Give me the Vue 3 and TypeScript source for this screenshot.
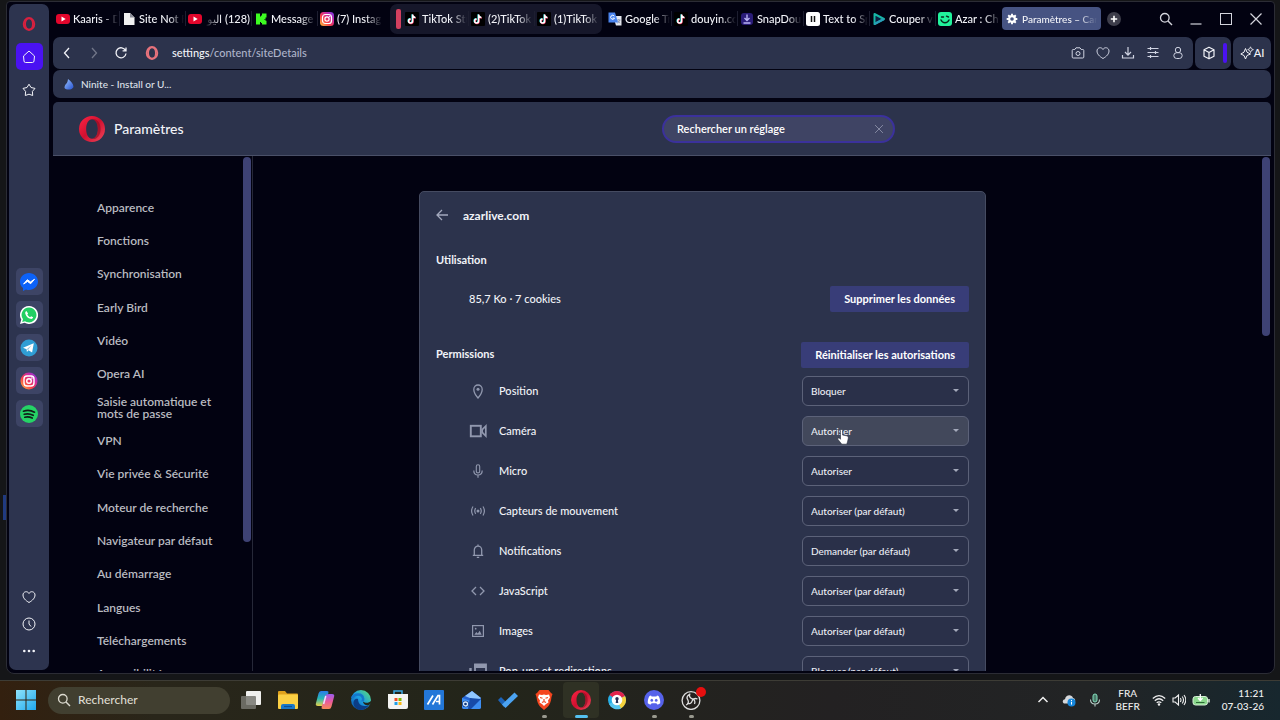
<script setup lang="ts">
import { ref } from 'vue'

interface Tab {
  icon: string
  title: string
  rtl?: boolean
}
interface Permission {
  id: string
  icon: string
  label: string
  value: string
  hovered?: boolean
}

const leftTabs: Tab[] = [
  { icon: 'youtube', title: 'Kaaris - D' },
  { icon: 'file', title: 'Site Not F' },
  { icon: 'youtube', title: '(128) اليو', rtl: true },
  { icon: 'kick', title: 'Message' },
  { icon: 'instagram', title: '(7) Instag' },
]
const groupTabs: Tab[] = [
  { icon: 'tiktok', title: 'TikTok Stu' },
  { icon: 'tiktok', title: '(2)TikTok' },
  { icon: 'tiktok', title: '(1)TikTok' },
]
const rightTabs: Tab[] = [
  { icon: 'translate', title: 'Google Tr' },
  { icon: 'tiktok', title: 'douyin.co' },
  { icon: 'snap', title: 'SnapDou' },
  { icon: 'eleven', title: 'Text to Sp' },
  { icon: 'play', title: 'Couper vi' },
  { icon: 'azar', title: 'Azar : Ch' },
]
const messengers = [
  { icon: 'messenger', label: 'Messenger' },
  { icon: 'whatsapp', label: 'WhatsApp' },
  { icon: 'telegram', label: 'Telegram' },
  { icon: 'insta-round', label: 'Instagram' },
  { icon: 'spotify', label: 'Spotify' },
]
const tools = [
  { icon: 'heart', label: 'Favoris' },
  { icon: 'clock', label: 'Historique' },
  { icon: 'dots', label: 'Plus' },
]
const pageActions = [
  { icon: 'camera', label: 'Capture' },
  { icon: 'heart', label: 'Ajouter aux favoris' },
  { icon: 'download', label: 'Téléchargements' },
  { icon: 'sliders', label: 'Configuration' },
  { icon: 'person', label: 'Profil' },
]
const sections = [
  'Apparence', 'Fonctions', 'Synchronisation', 'Early Bird', 'Vidéo', 'Opera AI',
  'Saisie automatique et mots de passe', 'VPN', 'Vie privée & Sécurité', 'Moteur de recherche',
  'Navigateur par défaut', 'Au démarrage', 'Langues', 'Téléchargements', 'Accessibilité',
]
const choices = [
  'Autoriser', 'Bloquer', 'Autoriser (par défaut)', 'Demander (par défaut)', 'Bloquer (par défaut)',
]
const permissions = ref<Permission[]>([
  { id: 'position', icon: 'pin', label: 'Position', value: 'Bloquer' },
  { id: 'camera', icon: 'video', label: 'Caméra', value: 'Autoriser', hovered: true },
  { id: 'micro', icon: 'mic', label: 'Micro', value: 'Autoriser' },
  { id: 'sensors', icon: 'sensor', label: 'Capteurs de mouvement', value: 'Autoriser (par défaut)' },
  { id: 'notifications', icon: 'bell', label: 'Notifications', value: 'Demander (par défaut)' },
  { id: 'javascript', icon: 'code', label: 'JavaScript', value: 'Autoriser (par défaut)' },
  { id: 'images', icon: 'image', label: 'Images', value: 'Autoriser (par défaut)' },
  { id: 'popups', icon: 'popup', label: 'Pop-ups et redirections', value: 'Bloquer (par défaut)' },
])
const apps = [
  { icon: 'taskview', label: 'Vue des tâches' },
  { icon: 'folder', label: 'Explorateur' },
  { icon: 'copilot', label: 'Copilot' },
  { icon: 'edge', label: 'Edge' },
  { icon: 'store', label: 'Store' },
  { icon: 'maven', label: 'Utilitaire' },
  { icon: 'wallet', label: 'Courrier' },
  { icon: 'todo', label: 'To Do' },
  { icon: 'brave', label: 'Brave', running: true },
  { icon: 'opera', label: 'Opera', running: true, active: true },
  { icon: 'keyring', label: 'Navigateur sécurisé' },
  { icon: 'discord', label: 'Discord', running: true },
  { icon: 'obs', label: 'OBS', running: true },
]
const query = ref('Rechercher un réglage')
</script>

<template>
  <div class="desktop">
    <svg class="defs" aria-hidden="true">
      <defs>
        <linearGradient id="g-opera" x1="0" y1="0" x2="1" y2="1">
          <stop offset="0" stop-color="#ff2444" /><stop offset=".5" stop-color="#d01030" /><stop offset="1" stop-color="#f0485c" />
        </linearGradient>
        <linearGradient id="g-insta" x1="0" y1="1" x2="1" y2="0">
          <stop offset="0" stop-color="#ffc53d" /><stop offset=".4" stop-color="#f53a4c" /><stop offset=".7" stop-color="#c62ba8" /><stop offset="1" stop-color="#6a3bea" />
        </linearGradient>
        <linearGradient id="g-win" x1="0" y1="0" x2="1" y2="1">
          <stop offset="0" stop-color="#8fe3fb" /><stop offset="1" stop-color="#1fa8ee" />
        </linearGradient>
        <linearGradient id="g-edge" x1="0" y1="1" x2="1" y2="0">
          <stop offset="0" stop-color="#0a4fa8" /><stop offset=".5" stop-color="#1b9de2" /><stop offset="1" stop-color="#62e36a" />
        </linearGradient>
        <linearGradient id="g-cop1" x1="0" y1="0" x2="0" y2="1">
          <stop offset="0" stop-color="#2a7bea" /><stop offset=".5" stop-color="#28b7b4" /><stop offset="1" stop-color="#e8d048" />
        </linearGradient>
        <linearGradient id="g-cop2" x1="0" y1="0" x2="0" y2="1">
          <stop offset="0" stop-color="#9a5cf0" /><stop offset=".5" stop-color="#ea5a9c" /><stop offset="1" stop-color="#f88a58" />
        </linearGradient>
        <linearGradient id="g-drop" x1="0" y1="0" x2="1" y2="1">
          <stop offset="0" stop-color="#9cc4ff" /><stop offset="1" stop-color="#2450d0" />
        </linearGradient>
      </defs>

      <symbol id="opera" viewBox="0 0 24 24"><path fill="url(#g-opera)" fill-rule="evenodd" d="M12 0a12 12 0 1 0 0 24 12 12 0 0 0 0-24zm0 3c3.200 0 5.400 4 5.400 9s-2.200 9-5.400 9-5.400-4-5.400-9 2.200-9 5.400-9z" /><path fill="#8c0d22" opacity=".6" d="M12 3c3.200 0 5.400 4 5.400 9s-2.200 9-5.400 9c3 1.500 8-2 8-9s-5-10.500-8-9z" /></symbol>
      <symbol id="opera-flat" viewBox="0 0 24 24"><ellipse cx="12" cy="12" rx="9" ry="10.200" fill="none" stroke="currentColor" stroke-width="3.400" /><ellipse cx="12" cy="12" rx="6.400" ry="9.500" fill="none" stroke="currentColor" stroke-width="2.400" /></symbol>
      <symbol id="youtube" viewBox="0 0 14 14"><rect y="2" width="14" height="10" rx="3" fill="#e3062c" /><path d="M5.500 4.600v4.800L9.700 7z" fill="#fff" /></symbol>
      <symbol id="file" viewBox="0 0 14 14"><path d="M2 1h6l4.500 4.500V13H2z" fill="#f1f1f1" /><path d="M8 1v4.500h4.500z" fill="#8b8d98" /></symbol>
      <symbol id="kick" viewBox="0 0 14 14"><path fill="#3dfb22" d="M2 1.500h4v3h1V3.500h1v-2h4.500v4h-1V7h-1.500v.5H11.500v1.300h1v3.700H8V11H7v-1H6v2.500H2z" /></symbol>
      <symbol id="instagram" viewBox="0 0 14 14"><rect width="14" height="14" rx="3.500" fill="url(#g-insta)" /><rect x="2.500" y="2.500" width="9" height="9" rx="2.800" fill="none" stroke="#fff" stroke-width="1.200" /><circle cx="7" cy="7" r="2.100" fill="none" stroke="#fff" stroke-width="1.200" /><circle cx="9.700" cy="4.400" r=".6" fill="#fff" /></symbol>
      <symbol id="insta-round" viewBox="0 0 18 18"><circle cx="9" cy="9" r="8.500" fill="url(#g-insta)" /><rect x="4" y="4" width="10" height="10" rx="3" fill="none" stroke="#fff" stroke-width="1.400" /><circle cx="9" cy="9" r="2.300" fill="none" stroke="#fff" stroke-width="1.400" /><circle cx="11.900" cy="6.100" r=".8" fill="#fff" /></symbol>
      <symbol id="tiktok" viewBox="0 0 14 14"><rect width="14" height="14" rx="1" fill="#000" /><g fill="none" stroke-width="1.500"><path stroke="#27e6e0" d="M7.200 2.200v6.600a2 2 0 1 1-2-2M7.200 3c.4 1.400 1.300 2.200 2.800 2.300" /><path stroke="#f0305a" d="M8 2.800v6.600a2 2 0 1 1-2-2M8 3.600c.4 1.400 1.300 2.200 2.800 2.300" /><path stroke="#fff" d="M7.600 2.500v6.600a2 2 0 1 1-2-2M7.600 3.300c.4 1.400 1.300 2.200 2.800 2.300" /></g></symbol>
      <symbol id="translate" viewBox="0 0 14 14"><path d="M5 4h8.500v9.500H8z" fill="#e3e6ee" /><path d="M9 8h3.500M10.800 7v1m1 0c-.3 1.500-1.300 2.500-2.300 3.200M9.800 9l2.400 2.300" stroke="#7c8aa8" fill="none" stroke-width=".7" /><path d="M.5.500H7l3 10H.5z" fill="#4a84ee" /><path d="M6.300 4.100a2 2 0 1 0 .2 2H4.700" fill="none" stroke="#fff" /></symbol>
      <symbol id="snap" viewBox="0 0 14 14"><rect x="1" y="1" width="12" height="12" rx="3" fill="#2a1c78" /><path d="M7 2.500v5.800M4.500 6 7 8.500 9.500 6M3.500 11h7" stroke="#b9b2f4" stroke-width="1.400" fill="none" /></symbol>
      <symbol id="eleven" viewBox="0 0 14 14"><rect width="14" height="14" rx="2.500" fill="#fff" /><path d="M5.500 4v6M8.500 4v6" stroke="#111" stroke-width="1.500" /></symbol>
      <symbol id="play" viewBox="0 0 14 14"><path d="M2.500 2 12 7l-9.500 5z" fill="#0c1f40" stroke="#16b6a6" stroke-width="2" stroke-linejoin="round" /><path d="M2.500 12 12 7" stroke="#2b9cb8" stroke-width="2" /></symbol>
      <symbol id="azar" viewBox="0 0 14 14"><rect width="14" height="14" rx="3" fill="#21f39c" /><path d="M3.500 5h2M8.500 4.200l2 .8M3 8c1.500 3.600 6.500 3.600 8 0" stroke="#08291c" stroke-width="1.400" fill="none" stroke-linecap="round" /></symbol>
      <symbol id="gear" viewBox="0 0 14 14"><path d="M7 .8v12.400M.8 7h12.400M2.600 2.600l8.800 8.800M11.400 2.600l-8.800 8.800" stroke="#fff" stroke-width="2.200" /><circle cx="7" cy="7" r="3.400" fill="none" stroke="#fff" stroke-width="2.400" /><circle cx="7" cy="7" r="2.100" fill="#465382" /></symbol>
      <symbol id="plus" viewBox="0 0 14 14"><circle cx="7" cy="7" r="7" fill="#3d3d4a" /><path d="M7 3.800v6.400M3.800 7h6.400" stroke="#fff" stroke-width="1.600" /></symbol>
      <symbol id="drop" viewBox="0 0 14 14"><path d="M6 2c3 2 5.500 5 5.500 8-1 3-7 3.500-9 1 0-2 .5-3 1.500-4C5.500 5.700 5.700 4 6 2z" fill="url(#g-drop)" /></symbol>

      <symbol id="search" viewBox="0 0 14 14"><circle cx="5.800" cy="5.800" r="4.300" fill="none" stroke="currentColor" stroke-width="1.300" /><path d="m9 9 4 4" stroke="currentColor" stroke-width="1.400" /></symbol>
      <symbol id="minimize" viewBox="0 0 14 14"><path d="M1.500 12h11" stroke="currentColor" stroke-width="1.200" /></symbol>
      <symbol id="maximize" viewBox="0 0 14 14"><rect x="1.500" y="1.500" width="11" height="11" fill="none" stroke="currentColor" /></symbol>
      <symbol id="close" viewBox="0 0 14 14"><path d="m1.500 1.500 11 11m0-11-11 11" stroke="currentColor" stroke-width="1.200" /></symbol>
      <symbol id="back" viewBox="0 0 14 14"><path d="M9 2 4.500 7 9 12" fill="none" stroke="currentColor" stroke-width="1.300" /></symbol>
      <symbol id="forward" viewBox="0 0 14 14"><path d="m5 2 4.500 5L5 12" fill="none" stroke="currentColor" stroke-width="1.300" /></symbol>
      <symbol id="reload" viewBox="0 0 14 14"><path d="M11.500 4.500A5 5 0 1 0 12 7.500M12 1.500v3.400H8.600" fill="none" stroke="currentColor" stroke-width="1.300" /></symbol>
      <symbol id="home" viewBox="0 0 14 14"><path d="M1.500 6 7 1l5.500 5-.5 5q-.1 1.500-1.500 1.500h-7Q2.100 12.500 2 11z" fill="none" stroke="currentColor" stroke-linejoin="round" /></symbol>
      <symbol id="star" viewBox="0 0 14 14"><path d="m7 1.200 2 3.300 4 .9-2.600 3 .3 4.100L7 11.200l-3.700 1.300.3-4.100L1 5.400l4-.9z" fill="none" stroke="currentColor" stroke-linejoin="round" /></symbol>
      <symbol id="heart" viewBox="0 0 14 14"><path d="M7 12.500C3.500 10.500 1 8 1 5c0-3.500 4.500-4.500 6-1.500C8.500.5 13 1.500 13 5c0 3-2.500 5.500-6 7.500z" fill="none" stroke="currentColor" stroke-linejoin="round" /></symbol>
      <symbol id="clock" viewBox="0 0 14 14"><circle cx="7" cy="7" r="6" fill="none" stroke="currentColor" /><path d="M7 3.500V7l2 2.500" fill="none" stroke="currentColor" /></symbol>
      <symbol id="dots" viewBox="0 0 14 14"><g fill="currentColor"><circle cx="2.300" cy="7" r="1.300" /><circle cx="7" cy="7" r="1.300" /><circle cx="11.700" cy="7" r="1.300" /></g></symbol>
      <symbol id="camera" viewBox="0 0 14 14"><path d="M1.200 4.500q0-1 1-1h1.600L5 1.800h4l1.200 1.700h1.600q1 0 1 1V11q0 1-1 1H2.200q-1 0-1-1z" fill="none" stroke="currentColor" /><circle cx="7" cy="7.500" r="2" fill="none" stroke="currentColor" /></symbol>
      <symbol id="download" viewBox="0 0 14 14"><path d="M7 1v8M4 6l3 3.200L10 6M1.500 9v3h11V9" fill="none" stroke="currentColor" stroke-width="1.200" /></symbol>
      <symbol id="sliders" viewBox="0 0 14 14"><path d="M1.500 2.500h11M1.500 6.500h11M1.500 10.500h11M4.500 1v3M9.500 5v3M4.500 9v3" fill="none" stroke="currentColor" stroke-width="1.200" /></symbol>
      <symbol id="person" viewBox="0 0 14 14"><circle cx="7" cy="4" r="2.700" fill="none" stroke="currentColor" /><rect x="2.800" y="6.700" width="8.400" height="5.800" rx="2.900" fill="none" stroke="currentColor" /></symbol>
      <symbol id="cube" viewBox="0 0 14 14"><path d="m7 1.200 5 2.600v6.400l-5 2.600-5-2.600V3.800zM2 3.800l5 2.700 5-2.700M7 6.500v6.300" fill="none" stroke="currentColor" stroke-width="1.200" stroke-linejoin="round" /></symbol>
      <symbol id="sparkle" viewBox="0 0 14 14"><path d="M5.500 2.500 7 6.200 10.500 8 7 9.500 5.500 13 4 9.500.8 8 4 6.200z" fill="none" stroke="currentColor" stroke-linejoin="round" /><path d="m10.500.8.9 2 2 .8-2 .9-.9 2-.9-2-1.900-.9 1.900-.8z" fill="none" stroke="currentColor" stroke-width=".8" /></symbol>

      <symbol id="messenger" viewBox="0 0 18 18"><path d="M9 0c5 0 9 3.700 9 8.500S14 17 9 17c-1 0-2-.1-3-.5L3 18v-3C1 13.500 0 11.200 0 8.500 0 3.700 4 0 9 0z" fill="#0c62f8" /><path d="m3.600 11 3.700-4.300 3.200 2.200 4-2.600-3.800 4.400-3.200-2.200z" fill="#fff" stroke="#fff" stroke-linejoin="round" /></symbol>
      <symbol id="whatsapp" viewBox="0 0 18 18"><path d="M9 0a9 9 0 1 1-4.400 16.800L0 18l1.300-4.400A9 9 0 0 1 9 0z" fill="#fff" /><path d="M9 1.600a7.400 7.400 0 1 1-4 13.600l-2.800.7.800-2.600A7.400 7.400 0 0 1 9 1.600z" fill="#22cf64" /><path d="M6.400 4.900c-1 .6-1.500 1.800-1 3C6.300 10.500 8 12 10.500 12.800c1.200.3 2.300-.2 2.600-1.500l-2-1.100-1 1c-1.300-.5-2.200-1.400-2.800-2.600l.8-1z" fill="#fff" /></symbol>
      <symbol id="telegram" viewBox="0 0 18 18"><circle cx="9" cy="9" r="8.500" fill="#2f9dd4" /><path d="m3 8.800 10.800-4.500-1.700 9.300-3.600-2.300-1.600 1.800-.3-2.800z" fill="#fff" /><path d="m6.600 10.300 4.900-4-3.400 4.800z" fill="#9cc8de" /></symbol>
      <symbol id="spotify" viewBox="0 0 18 18"><circle cx="9" cy="9" r="9" fill="#25d366" /><path d="M3.500 6.200c3.500-1.200 7.800-.8 11 1M4.200 9.300c3-.9 6.200-.5 9 1M4.800 12.200c2.500-.7 5-.4 7.400.9" stroke="#102018" stroke-width="1.700" fill="none" stroke-linecap="round" /></symbol>

      <symbol id="arrow-left" viewBox="0 0 14 14"><path d="M12 6H1.500M6 1 1 6l5 5" fill="none" stroke="currentColor" stroke-width="1.300" /></symbol>
      <symbol id="pin" viewBox="0 0 16 16"><path d="M8 15C5.500 12 3.800 9.300 3.800 6.400a4.200 4.400 0 0 1 8.400 0C12.200 9.300 10.500 12 8 15z" fill="none" stroke="currentColor" stroke-width="1.300" /><circle cx="8" cy="6.300" r="1.500" fill="currentColor" /></symbol>
      <symbol id="video" viewBox="0 0 18 16"><rect x="1.800" y="2.800" width="10" height="10.500" fill="none" stroke="currentColor" stroke-width="1.900" /><path d="m16.800 3-3.600 3.700v2.600l3.600 3.700z" fill="none" stroke="currentColor" stroke-width="1.700" /></symbol>
      <symbol id="mic" viewBox="0 0 16 16"><rect x="6.300" y="1.800" width="3.400" height="8.200" rx="1.700" fill="none" stroke="currentColor" stroke-width="1.100" /><path d="M3.800 7.500c0 2.800 1.800 4.500 4.200 4.500s4.200-1.700 4.200-4.500M8 12v2.800" fill="none" stroke="currentColor" stroke-width="1.200" /></symbol>
      <symbol id="sensor" viewBox="0 0 16 16"><circle cx="8" cy="8" r="1.500" fill="currentColor" /><path d="M5.700 5.200q-1.900 2.800 0 5.600M10.300 5.200q1.900 2.800 0 5.600M3 3.500q-2.800 4.500 0 9M13 3.500q2.800 4.500 0 9" fill="none" stroke="currentColor" stroke-width="1.200" /></symbol>
      <symbol id="bell" viewBox="0 0 16 16"><path d="M2.800 12.400h10.400M4.300 12V7a3.700 3.900 0 0 1 7.400 0v5M8 1.500V3M6.800 14.300h2.400" fill="none" stroke="currentColor" stroke-width="1.300" /></symbol>
      <symbol id="code" viewBox="0 0 16 16"><path d="M6 4 2 8l4 4M10 4l4 4-4 4" fill="none" stroke="currentColor" stroke-width="1.300" /></symbol>
      <symbol id="image" viewBox="0 0 16 16"><rect x="2.600" y="2.600" width="10.800" height="10.800" fill="none" stroke="currentColor" stroke-width="1.200" /><path d="m4.300 11.700 2-2.800 1.500 1.500 1.900-2.700 2 4z" fill="currentColor" /><circle cx="5.700" cy="5.700" r=".9" fill="currentColor" /></symbol>
      <symbol id="popup" viewBox="0 0 18 16"><path d="M6 1.500h11v10H6z" fill="none" stroke="currentColor" stroke-width="1.800" /><path d="M5 1h12v4H5z" fill="currentColor" /><path d="M1.500 5v10H13" fill="none" stroke="currentColor" stroke-width="2.400" /></symbol>
      <symbol id="caret" viewBox="0 0 6 3"><path d="M0 0h6L3 3z" fill="currentColor" /></symbol>
      <symbol id="hand" viewBox="0 0 12 16"><path d="M3.500 1.500c0-1.300 2-1.300 2 0V6l4 .8c1.300.3 2 1 1.800 2.400l-.8 3.800-.8 2.200H4.800L1 10.500c-.8-1 .6-2 1.500-1.200l1 1z" fill="#fff" stroke="#222838" stroke-width=".6" /></symbol>

      <symbol id="windows" viewBox="0 0 20 20"><path d="M0 0h9.500v9.500H0zM10.500 0H20v9.500h-9.500zM0 10.500h9.500V20H0zM10.500 10.500H20V20h-9.500z" fill="url(#g-win)" /></symbol>
      <symbol id="taskview" viewBox="0 0 20 20"><rect x="5" y="1" width="15" height="14" rx="1" fill="#f0f0ee" /><rect x="0" y="6" width="15" height="13" rx="1" fill="#777770" opacity=".85" /></symbol>
      <symbol id="folder" viewBox="0 0 20 20"><path d="M0 2q0-1 1-1h6l2 2.500h10q1 0 1 1V8H0z" fill="#e0a21c" /><rect y="4.500" width="20" height="14.500" rx="1" fill="#fbd044" /><path d="M3 19v-3q0-2 2-2h10q2 0 2 2v3z" fill="#1a78c8" /><path d="M6 16.500h8" stroke="#0d4f94" stroke-width="1.200" /></symbol>
      <symbol id="copilot" viewBox="0 0 20 20"><path d="M6 1h6q2 0 1.400 2L10 14q-.7 2-3 2H3q-3 0-2-3L3.500 3.500Q4.200 1 6 1z" fill="url(#g-cop1)" /><path d="M14 4h3q3 0 2 3l-2.500 9.500Q15.800 19 14 19H8q-2 0-1.400-2L10 6q.7-2 4-2z" fill="url(#g-cop2)" /><path d="m10.800 6-2.200 8" stroke="#e9e4ff" stroke-width="1.500" /></symbol>
      <symbol id="edge" viewBox="0 0 20 20"><circle cx="10" cy="10" r="10" fill="url(#g-edge)" /><path d="M7 9c0 6 5 8.500 11 6-2 3.500-5 5-8.500 5C4 19.500 2 15 2.500 12 3 9.500 5 8 7 9z" fill="#0b3d86" /><path d="M12 11.500c2.500 2 6 1.500 8-.5v2.500l-2 1.500c-3 1-6-1-6-3.500z" fill="#24271c" /><path d="M1 8C4 3 11 3.500 12 8c.5 2-.5 2.500-.5 3.500" fill="none" stroke="#1477cc" stroke-width="2.500" /></symbol>
      <symbol id="store" viewBox="0 0 20 20"><path d="M6 5V1h8v4" fill="none" stroke="#3aa7e4" stroke-width="1.500" /><path d="M0 4h20v13q0 2-2 2H2q-2 0-2-2z" fill="#f4f4f2" /><path d="M6.500 8h3v3h-3z" fill="#f04c25" /><path d="M10.500 8h3v3h-3z" fill="#7db800" /><path d="M6.500 12h3v3h-3z" fill="#1f9fe8" /><path d="M10.500 12h3v3h-3z" fill="#fdb813" /></symbol>
      <symbol id="maven" viewBox="0 0 20 20"><rect width="20" height="20" rx="1" fill="#2377d8" /><path d="m3.500 14.500 5.500-9M8.500 14.500l5.500-9h1.500v9M12 11.500h3" stroke="#fff" stroke-width="1.700" fill="none" /></symbol>
      <symbol id="wallet" viewBox="0 0 20 20"><path d="M1 8 11 1l9 7v9q0 2-2 2H3q-2 0-2-2z" fill="#2563d2" /><path d="m4 6 7-5 9 7-4 3z" fill="#8fc6ff" /><path d="m1 8 12 4 7-3v9q-1 1-2 1H3q-2 0-2-2z" fill="#3d8ef2" /><path d="m9 8 11 1-10 10H7z" fill="#174aa8" /><circle cx="4.500" cy="14" r="3.300" fill="#123a80" /><circle cx="4.500" cy="14" r="2" fill="none" stroke="#d5eaff" stroke-width="1.300" /></symbol>
      <symbol id="todo" viewBox="0 0 20 20"><path d="m0 10 3-3 6 6-3 4z" fill="#1c63b8" /><path d="M16.500 2.500 20 6 7.500 18 4 14.500z" fill="#4ba3f2" /></symbol>
      <symbol id="brave" viewBox="0 0 20 20"><path d="M5.500 0h9L17 3l1.500 1-1 3c-.5 5-2 8-3.500 9.500L10 20l-4-3.500C4.500 15 3 12 2.500 7l-1-3L3 3z" fill="#f4451e" /><path d="m5 4.500 3 .5 2-.5 2 .5 3-.5 1 3-2 3 .5 2-2.500 1.500-2 2-2-2L5.500 12.500l.5-2-2-3z" fill="#fff" /><path d="m6 7.500 2.500.8M14 7.500l-2.500.8M10 9v2.500M8 12.500l2-1 2 1" stroke="#f4451e" stroke-width="1.200" fill="none" /></symbol>
      <symbol id="keyring" viewBox="0 0 20 20"><circle cx="10" cy="10" r="9" fill="#25aee6" /><path d="M10 10 2.500 5A9 9 0 0 1 18 6z" fill="#e3244c" /><path d="M10 10 18 6a9 9 0 0 1-9 13z" fill="#f6d33c" /><path d="m10 10 4 8.500A9 9 0 0 1 2 14z" fill="#58c6f0" /><circle cx="10" cy="10" r="5.300" fill="#fff" /><circle cx="10" cy="8.700" r="1.700" fill="#25305a" /><path d="M9.300 9h1.400l.6 4H8.700z" fill="#25305a" /></symbol>
      <symbol id="discord" viewBox="0 0 20 20"><circle cx="10" cy="10" r="10" fill="#5662ea" /><path d="M7 5.500 5.500 6C4 8.500 3.600 11 3.800 13.300c1 .8 2 1.200 3 1.300l.8-1.300h4.800l.8 1.300c1-.1 2-.5 3-1.300.2-2.300-.2-4.800-1.700-7.300L13 5.500l-.6 1H7.600z" fill="#fff" /><ellipse cx="7.800" cy="10.300" rx="1.300" ry="1.500" fill="#5662ea" /><ellipse cx="12.200" cy="10.300" rx="1.300" ry="1.500" fill="#5662ea" /></symbol>
      <symbol id="obs" viewBox="0 0 20 20"><circle cx="10" cy="10.500" r="8.900" fill="#24211f" stroke="#dedede" stroke-width="1.300" /><path d="M9 3.500c-1.500 3 .5 5 2.500 5.500s3 2.500 2 5M16.500 9c-3-1.300-5 .2-5.500 2.300s-2.500 3-5 2M5 15c2.800-1 2.800-3.600 1.700-5.300S6 6 8 4.500" fill="none" stroke="#dedede" stroke-width="1.300" /></symbol>
      <symbol id="chevron-up" viewBox="0 0 14 14"><path d="m2.500 9 4.500-4.500L11.500 9" fill="none" stroke="currentColor" stroke-width="1.500" /></symbol>
      <symbol id="cloud" viewBox="0 0 14 14"><path d="M3 10.500c-3 0-3-4 0-4.300C3.500 1.500 10 1 11 5c2 .3 2.500 2 2 3.500l-3 2z" fill="#d5d7da" /><circle cx="9.500" cy="9.500" r="4" fill="#1687dc" /><path d="M9.500 8.800v2.800M9.500 7v1" stroke="#fff" /></symbol>
      <symbol id="tray-mic" viewBox="0 0 14 14"><rect x="5" y="1" width="4" height="8" rx="2" fill="#4a7c6a" stroke="#83dcbc" /><path d="M2.500 6.500c0 6 9 6 9 0M7 11v2.500" fill="none" stroke="#b9cdc8" stroke-width="1.100" /></symbol>
      <symbol id="wifi" viewBox="0 0 14 14"><path d="M.8 5.500q6.200-5.800 12.400 0M2.800 7.700q4.200-3.900 8.400 0M4.700 9.800q2.300-2 4.600 0" fill="none" stroke="currentColor" stroke-width="1.200" /><circle cx="7" cy="11.500" r="1.200" fill="currentColor" /></symbol>
      <symbol id="volume" viewBox="0 0 14 14"><path d="M1 5h2.200L6.500 2v10L3.200 9H1zM8.300 5q1.400 2 0 4M10.200 3.500q2.600 3.500 0 7M12 2q3.600 5 0 10" fill="none" stroke="currentColor" stroke-width="1.100" /></symbol>
      <symbol id="battery" viewBox="0 0 18 14"><rect x="1" y="3.500" width="14.500" height="8.500" rx="2.500" fill="#8bd88d" stroke="#d8efd8" /><path d="M17 6v3.500" stroke="#d8efd8" stroke-width="1.500" /><path d="M8.300 1v6M6 5l2.300 2.500L10.600 5" stroke="#fff" stroke-width="1.300" fill="none" /><path d="M4 9.500h8.500" stroke="#2b6b34" /></symbol>
    </svg>

    <div class="window">
      <aside class="sidebar">
        <div class="side-group spaced">
          <button class="side-btn red" aria-label="Menu Opera"><svg class="i14"><use href="#opera-flat" /></svg></button>
          <button class="side-btn current" aria-label="Accueil"><svg class="i14"><use href="#home" /></svg></button>
          <button class="side-btn" aria-label="Signets"><svg class="i14"><use href="#star" /></svg></button>
        </div>
        <div class="side-group spaced messengers">
          <button v-for="m in messengers" :key="m.icon" class="side-btn app" :aria-label="m.label">
            <svg class="i18"><use :href="'#' + m.icon" /></svg>
          </button>
        </div>
        <div class="side-group bottom">
          <button v-for="t in tools" :key="t.icon" class="side-btn" :aria-label="t.label">
            <svg class="i14"><use :href="'#' + t.icon" /></svg>
          </button>
        </div>
      </aside>

      <div class="main">
        <div class="tabstrip">
          <button v-for="t in leftTabs" :key="t.title" class="tab">
            <svg class="i14"><use :href="'#' + t.icon" /></svg>
            <span class="tab-title" :class="{ rtl: t.rtl }">{{ t.title }}</span>
          </button>
          <div class="tab-group">
            <i class="group-mark"></i>
            <button v-for="t in groupTabs" :key="t.title" class="tab">
              <svg class="i14"><use :href="'#' + t.icon" /></svg><span class="tab-title">{{ t.title }}</span>
            </button>
          </div>
          <button v-for="t in rightTabs" :key="t.title" class="tab">
            <svg class="i14"><use :href="'#' + t.icon" /></svg><span class="tab-title">{{ t.title }}</span>
          </button>
          <button class="tab active">
            <svg class="i12"><use href="#gear" /></svg><span class="tab-title">Paramètres – Car</span>
          </button>
          <button class="bare new-tab" aria-label="Nouvel onglet"><svg class="i14"><use href="#plus" /></svg></button>
          <div class="win-controls">
            <button class="bare" aria-label="Rechercher dans les onglets"><svg class="i14"><use href="#search" /></svg></button>
            <button class="bare" aria-label="Réduire"><svg class="i14"><use href="#minimize" /></svg></button>
            <button class="bare" aria-label="Agrandir"><svg class="i14"><use href="#maximize" /></svg></button>
            <button class="bare" aria-label="Fermer"><svg class="i14"><use href="#close" /></svg></button>
          </div>
        </div>

        <div class="toolbar">
          <div class="address">
            <button class="bare" aria-label="Précédent"><svg class="i14"><use href="#back" /></svg></button>
            <button class="bare dim" aria-label="Suivant"><svg class="i14"><use href="#forward" /></svg></button>
            <button class="bare" aria-label="Recharger"><svg class="i14"><use href="#reload" /></svg></button>
            <svg class="i14 site"><use href="#opera-flat" /></svg>
            <span class="url"><b>settings</b>/content/siteDetails</span>
            <div class="actions">
              <button v-for="a in pageActions" :key="a.icon" class="bare" :aria-label="a.label">
                <svg class="i14"><use :href="'#' + a.icon" /></svg>
              </button>
            </div>
          </div>
          <button class="tool cube" aria-label="Extensions"><svg class="i14"><use href="#cube" /></svg><i></i></button>
          <button class="tool ai"><svg class="i14"><use href="#sparkle" /></svg>AI</button>
        </div>

        <div class="bookmarks">
          <a href="#ninite"><svg class="i14"><use href="#drop" /></svg>Ninite - Install or U...</a>
        </div>

        <div class="page">
          <header class="page-head">
            <svg class="i26"><use href="#opera" /></svg>
            <h1>Paramètres</h1>
            <div class="search">
              <input v-model="query" type="text" aria-label="Rechercher un réglage" />
              <button class="bare" aria-label="Effacer"><svg class="i10"><use href="#close" /></svg></button>
            </div>
          </header>
          <div class="page-body">
            <nav class="settings-nav">
              <ul>
                <li v-for="s in sections" :key="s"><a href="#section">{{ s }}</a></li>
              </ul>
              <i class="thumb nav-thumb"></i>
            </nav>
            <main class="content">
              <section class="card">
                <div class="card-title">
                  <button class="bare" aria-label="Retour"><svg class="i14"><use href="#arrow-left" /></svg></button>
                  <h2>azarlive.com</h2>
                </div>
                <h3 class="usage-title">Utilisation</h3>
                <div class="usage">
                  <span>85,7 Ko · 7 cookies</span>
                  <button class="primary">Supprimer les données</button>
                </div>
                <div class="perm-head">
                  <h3>Permissions</h3>
                  <button class="primary">Réinitialiser les autorisations</button>
                </div>
                <div v-for="p in permissions" :key="p.id" class="perm">
                  <svg class="perm-icon"><use :href="'#' + p.icon" /></svg>
                  <label :for="p.id">{{ p.label }}</label>
                  <div class="picker">
                    <select :id="p.id" v-model="p.value" :class="{ hovered: p.hovered }">
                      <option v-for="c in choices" :key="c">{{ c }}</option>
                    </select>
                    <svg class="caret"><use href="#caret" /></svg>
                    <svg v-if="p.hovered" class="pointer"><use href="#hand" /></svg>
                  </div>
                </div>
              </section>
              <i class="thumb page-thumb"></i>
            </main>
          </div>
        </div>
      </div>
    </div>

    <footer class="taskbar">
      <button class="bare start" aria-label="Démarrer"><svg class="i20"><use href="#windows" /></svg></button>
      <button class="task-search"><svg class="i14"><use href="#search" /></svg>Rechercher</button>
      <div class="apps">
        <button v-for="a in apps" :key="a.icon" class="task-app" :class="{ running: a.running, active: a.active }" :aria-label="a.label">
          <svg class="i20"><use :href="'#' + a.icon" /></svg>
          <i v-if="a.icon === 'obs'" class="rec"></i>
        </button>
      </div>
      <div class="tray">
        <button class="bare" aria-label="Icônes cachées"><svg class="i14"><use href="#chevron-up" /></svg></button>
        <button class="bare" aria-label="OneDrive"><svg class="i14"><use href="#cloud" /></svg></button>
        <button class="bare" aria-label="Microphone"><svg class="i14"><use href="#tray-mic" /></svg></button>
        <div class="lang">FRA<br />BEFR</div>
        <div class="status">
          <svg class="i14"><use href="#wifi" /></svg>
          <svg class="i14"><use href="#volume" /></svg>
          <svg class="i18"><use href="#battery" /></svg>
        </div>
        <div class="time">11:21<br />07-03-26</div>
      </div>
    </footer>
  </div>
</template>

<style>
body { background: #141416; }
</style>

<style scoped>
.desktop {
  position: relative;
  display: flex;
  flex-direction: column;
  height: 100vh;
  overflow: hidden;
  box-sizing: border-box;
  padding-top: 1px;
  background: #151618;
  color: #f2f3f8;
  font-family: Lato, "Noto Sans", sans-serif;
  font-size: 11px;
  font-weight: 500;
  line-height: 16px;
}
.desktop::before {
  content: "";
  position: absolute;
  left: 3px;
  top: 495px;
  width: 3px;
  height: 25px;
  background: #203a80;
}
.desktop *, .desktop *::before, .desktop *::after { box-sizing: border-box; }
.defs { position: absolute; width: 0; height: 0; }
svg { display: block; flex: none; }
.i10 { width: 10px; height: 10px; }
.i12 { width: 12px; height: 12px; }
.i14 { width: 14px; height: 14px; }
.i18 { width: 18px; height: 18px; }
.i20 { width: 20px; height: 20px; }
.i26 { width: 26px; height: 26px; }
button {
  border: 0;
  padding: 0;
  margin: 0;
  background: none;
  color: inherit;
  font: inherit;
  display: flex;
  align-items: center;
  justify-content: center;
}
a { color: inherit; text-decoration: none; }
h1, h2, h3, ul { margin: 0; padding: 0; }
.bare { flex: none; }

.window {
  position: relative;
  flex: 1;
  min-height: 0;
  display: flex;
  gap: 4px;
  margin: 0 5px 6px 6px;
  padding: 0 3px 2px 2px;
  border: 1px solid #2b2c35;
  border-radius: 4px 4px 8px 8px;
  background: #020211;
}

.sidebar {
  flex: none;
  width: 40px;
  margin: 2px 0 1px;
  padding: 6px 0;
  display: flex;
  flex-direction: column;
  align-items: center;
  border-radius: 7px;
  background: #2d344f;
}
.side-group { display: flex; flex-direction: column; }
.spaced { gap: 6px; }
.messengers { margin-top: 165px; }
.bottom { margin-top: auto; }
.side-btn { width: 27px; height: 27px; border-radius: 5px; }
.side-btn.red { color: #d8213f; }
.side-btn.current { background: #4a12f2; }
.side-btn.app { background: #3d4465; }

.main {
  flex: 1;
  min-width: 0;
  display: flex;
  flex-direction: column;
}
.tabstrip {
  flex: none;
  height: 33px;
  margin-bottom: 2px;
  padding-left: 1px;
  display: flex;
  align-items: center;
}
.tab {
  position: relative;
  flex: 0 1 66px;
  min-width: 0;
  height: 23px;
  padding: 0 2px;
  gap: 3px;
  justify-content: flex-start;
}
.tab + .tab:not(.active)::before {
  content: "";
  position: absolute;
  left: -1px;
  top: 4px;
  height: 15px;
  width: 1px;
  background: #1d1e30;
}
.tab-title {
  flex: 1;
  min-width: 0;
  overflow: hidden;
  white-space: nowrap;
  text-align: left;
  mask-image: linear-gradient(to right, #000 65%, transparent);
}
.tab-title.rtl {
  direction: rtl;
  text-align: right;
  mask-image: linear-gradient(to left, #000 65%, transparent);
}
.tab-group {
  flex: 0 1 212px;
  min-width: 0;
  height: 30px;
  margin: 0 4px 0 6px;
  padding-left: 6px;
  display: flex;
  align-items: center;
  border-radius: 7px;
  background: #16172a;
}
.group-mark { flex: none; width: 5px; height: 20px; margin-right: 2px; border-radius: 2px; background: #d3405f; }
.tab.active {
  flex: 0 1 99px;
  padding: 0 4px;
  gap: 4px;
  border-radius: 4px;
  background: #465382;
  font-size: 10px;
}
.tab.active .tab-title { mask-image: linear-gradient(to right, #000 75%, transparent); }
.new-tab { margin-left: 6px; }
.win-controls { display: flex; gap: 16px; margin-left: auto; padding-right: 8px; color: #d3d4dc; }

.toolbar { flex: none; height: 32px; display: flex; gap: 2px; }
.address {
  flex: 1;
  min-width: 0;
  display: flex;
  align-items: center;
  padding: 0 8px 0 7px;
  gap: 13px;
  border-radius: 7px;
  background: #2c334c;
}
.dim { opacity: .35; }
.site { margin-left: 4px; color: #e8737c; }
.url { color: #aeb4ca; }
.url b { color: #f2f3f8; font-weight: 500; }
.actions { display: flex; gap: 11px; margin-left: auto; color: #cfd3e2; }
.tool { flex: none; border-radius: 7px; background: #2c334c; }
.cube { width: 36px; gap: 7px; padding-left: 2px; }
.cube i { width: 4px; height: 20px; border-radius: 2px; background: #4a12f2; }
.ai { width: 38px; }

.bookmarks {
  flex: none;
  height: 28px;
  margin: 1px 0 4px;
  padding: 0 9px;
  display: flex;
  align-items: center;
  border-radius: 7px;
  background: #2c334c;
}
.bookmarks a { display: flex; align-items: center; gap: 5px; color: #dfe1ea; font-size: 10px; }

.page {
  flex: 1;
  min-height: 0;
  display: flex;
  flex-direction: column;
  overflow: hidden;
  border-radius: 5px 5px 0 0;
}
.page-head {
  flex: none;
  height: 54px;
  padding-left: 26px;
  display: flex;
  align-items: center;
  gap: 9px;
  border-bottom: 1px solid #4a5068;
  background: #2c334c;
}
.page-head h1 { flex: 0 0 539px; font-size: 14px; font-weight: 500; }
.search {
  flex: 0 1 233px;
  height: 28px;
  display: flex;
  align-items: center;
  padding: 0 9px 0 13px;
  border: 2px solid #3b319c;
  border-radius: 14px;
  background: #3f4464;
  color: #9095ac;
}
.search input {
  flex: 1;
  min-width: 0;
  border: 0;
  padding: 0;
  outline: 0;
  background: none;
  color: #fff;
  font: inherit;
  font-weight: 600;
}
.page-body { flex: 1; min-height: 0; display: flex; }
.settings-nav {
  position: relative;
  flex: none;
  width: 200px;
  padding: 35px 30px 0 44px;
  border-right: 1px solid #262838;
}
.settings-nav ul {
  height: 500px;
  display: grid;
  grid-auto-rows: 1fr;
  list-style: none;
}
.settings-nav li {
  display: flex;
  align-items: center;
  color: #b9bac0;
  font-size: 12px;
  font-weight: 600;
  line-height: 12px;
}
.thumb { position: absolute; width: 8px; border-radius: 4px; background: #3e4274; }
.nav-thumb { top: 1px; right: 1px; height: 385px; }
.page-thumb { top: 1px; right: 1px; height: 179px; }

.content { position: relative; flex: 1; min-width: 0; padding: 35px 20px 0 166px; }
.card {
  max-width: 567px;
  padding: 0 16px;
  border: 1px solid #454b61;
  border-radius: 5px;
  background: #2c334c;
}
.card-title { height: 48px; display: flex; align-items: center; gap: 13px; }
.card-title .bare { color: #a3a9bd; }
h2 { font-size: 12px; font-weight: 700; }
h3 { font-size: 11px; font-weight: 700; }
.usage-title { line-height: 40px; }
.usage { height: 38px; padding-left: 33px; display: flex; align-items: center; justify-content: space-between; }
.perm-head { height: 26px; margin: 24px 0 3px; display: flex; align-items: center; justify-content: space-between; }
.perm-head h3 { padding-bottom: 2px; }
.primary { height: 26px; padding: 0 14px; border-radius: 2px; background: #383d78; color: #fff; font-weight: 700; }
.perm { height: 40px; padding-left: 33px; display: flex; align-items: center; }
.perm-icon { width: 18px; height: 16px; margin-right: 12px; color: #9198ae; }
.perm label { flex: 1; }
.picker { position: relative; width: 167px; }
.picker select {
  display: block;
  appearance: none;
  width: 100%;
  height: 30px;
  margin: 0;
  padding: 0 24px 0 8px;
  border: 1px solid #5c6279;
  border-radius: 6px;
  outline: 0;
  background: #2a3049;
  color: #eceef5;
  font: inherit;
  font-size: 10px;
}
.picker select.hovered { background: #42485b; }
.caret { position: absolute; right: 10px; top: 13px; width: 6px; height: 3px; color: #a4a9bb; }
.pointer { position: absolute; left: 35px; top: 13px; width: 12px; height: 16px; }

.taskbar {
  flex: none;
  height: 40px;
  display: flex;
  align-items: center;
  padding: 0 16px 1px;
  border-top: 1px solid #3d3c35;
  background: linear-gradient(to right, #33200f, #29261a 12%, #23251a 38%, #232122 65%, #222425 85%, #17272e);
}
.task-search {
  flex: 0 1 182px;
  height: 27px;
  margin: 0 3px 0 12px;
  padding-left: 9px;
  gap: 7px;
  justify-content: flex-start;
  border-radius: 14px;
  background: #413f30;
  color: #dcdacf;
  font-size: 12px;
}
.apps { flex: 0 1 476px; display: grid; grid-template-columns: repeat(13, 1fr); }
.task-app { position: relative; height: 36px; border-radius: 4px; }
.task-app.running::after {
  content: "";
  position: absolute;
  left: 50%;
  bottom: 0;
  width: 5px;
  height: 3px;
  margin-left: -2px;
  border-radius: 2px;
  background: #99998f;
}
.task-app.active { background: #2f3124; }
.task-app.active::after { width: 13px; margin-left: -6px; background: #55c1f0; }
.rec { position: absolute; right: 3px; top: 5px; width: 10px; height: 10px; border-radius: 5px; background: #e60f0f; }
.tray { margin-left: auto; display: flex; align-items: center; gap: 12px; font-size: 10px; line-height: 13px; color: #eeeeee; }
.lang { text-align: center; margin-left: 2px; }
.status { display: flex; align-items: center; gap: 6px; }
.time { text-align: right; }
</style>
